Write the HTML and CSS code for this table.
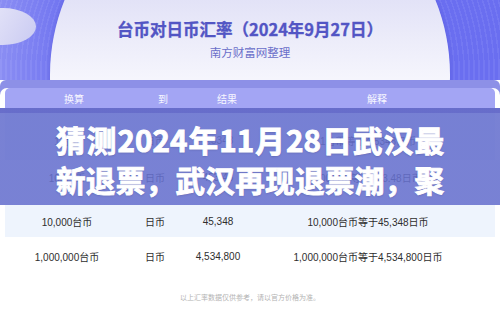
FILE: index.html
```html
<!DOCTYPE html>
<html lang="zh-CN">
<head>
<meta charset="utf-8">
<title>台币对日币汇率</title>
<link rel="stylesheet" href="styles.css">
</head>
<body>
<div class="page">
  <header class="hero">
    <h1 class="hero-title">台币对日币汇率（2024年9月27日）</h1>
    <p class="hero-sub">南方财富网整理</p>
  </header>
  <section class="card">
    <div class="sheet">
      <div class="thead"><span>换算</span><span>到</span><span>结果</span><span>解释</span></div>
      <div class="row r1 alt"><span>1台币</span><span>日币</span><span>4.5348</span><span>1台币等于4.5348日币</span></div>
      <div class="row r2"><span>100台币</span><span>日币</span><span>453.48</span><span>100台币等于453.48日币</span></div>
      <div class="row r3 alt"><span>10,000台币</span><span>日币</span><span>45,348</span><span>10,000台币等于45,348日币</span></div>
      <div class="row r4"><span>1,000,000台币</span><span>日币</span><span>4,534,800</span><span>1,000,000台币等于4,534,800日币</span></div>
      <p class="note">以上汇率数据仅供参考，请以官方价格为准。</p>
    </div>
  </section>
  <div class="overlay">
    <h2 class="headline">猜测2024年11月28日武汉最新退票，武汉再现退票潮，聚</h2>
  </div>
</div>
</body>
</html>
```
FILE: styles.css
```css
html, body {
  margin: 0;
  padding: 0;
}
body {
  width: 500px;
  height: 312px;
  overflow: hidden;
  background: #fff;
  font-family: "Noto Sans CJK SC", sans-serif;
}
.page {
  position: relative;
  width: 500px;
  height: 312px;
  overflow: hidden;
}
.hero {
  position: relative;
  height: 80px;
  box-sizing: border-box;
  padding-top: 18px;
  overflow: hidden;
  display: flex;
  flex-direction: column;
  align-items: center;
  background:
    linear-gradient(90deg, rgba(255,255,255,0.22), rgba(255,255,255,0) 16%),
    repeating-radial-gradient(circle at 250px 75px, #6a6ef0 0 3.5px, #7478f2 3.5px 5px);
}
.hero::before {
  content: "";
  position: absolute;
  left: 50px;
  top: -125px;
  width: 400px;
  height: 400px;
  border-radius: 50%;
  background: linear-gradient(180deg, #dcdcf6 0%, #e2e2f7 31%, #ededfa 42%, #f6f6fd 52%);
  box-shadow: 0 0 5px rgba(70, 70, 190, 0.3);
}
.hero::after {
  content: "";
  position: absolute;
  left: -30px;
  top: 8px;
  width: 66px;
  height: 37px;
  border-radius: 50%;
  background: linear-gradient(120deg, #ececfb 0%, #d8d8f5 60%, #c9caf2 100%);
}
.hero-title {
  position: relative;
  z-index: 1;
  margin: 0;
  font-size: 16.5px;
  line-height: 22px;
  font-weight: 700;
  color: #5255c4;
  -webkit-text-stroke: 0.35px #5255c4;
}
.hero-sub {
  position: relative;
  z-index: 1;
  margin: 4px 0 0;
  font-size: 11.5px;
  line-height: 16px;
  color: #6a6ec9;
}
.card {
  background: #8d90e7;
  padding-top: 8px;
  border-radius: 6px 6px 0 0;
}
.sheet {
  background: #fff;
  border-radius: 7px 7px 0 0;
  padding: 0 5px;
  height: 224px;
}
.thead {
  display: grid;
  grid-template-columns: 138px 40px 88px 212px;
  height: 20px;
  align-items: center;
  text-align: center;
  background: #a3a5f4;
  color: #f8f8ff;
  font-size: 10px;
  border-radius: 5px 5px 0 0;
}
.row {
  display: grid;
  grid-template-columns: 124px 52px 74px 226px;
  align-items: center;
  text-align: center;
  box-sizing: border-box;
  font-family: "Liberation Sans", "Noto Sans CJK SC", sans-serif;
  font-size: 10px;
  color: #2e2e2e;
}
.alt {
  background: #eef4fd;
}
.r1 {
  height: 52px;
  padding-top: 12px;
}
.r2 {
  height: 45px;
  padding-bottom: 11px;
}
.r3 {
  height: 32px;
}
.r4 {
  height: 38px;
}
.note {
  margin: 17px 0 0;
  font-size: 7px;
  line-height: 10px;
  text-align: center;
  color: #b3b3b3;
}
.overlay {
  position: absolute;
  left: 0;
  top: 108px;
  width: 500px;
  height: 97px;
  background:
    linear-gradient(180deg, rgba(96, 102, 200, 0.95) 0 5px, rgba(102, 112, 206, 0.88) 5px);
}
.headline {
  width: 388px;
  margin: 12px auto 0;
  font-size: 29.6px;
  line-height: 40px;
  font-weight: 700;
  color: #fff;
  text-align: justify;
  text-align-last: justify;
  -webkit-text-stroke: 0.9px #fff;
  text-shadow: 0 1px 2px rgba(30, 30, 80, 0.25);
}
```
